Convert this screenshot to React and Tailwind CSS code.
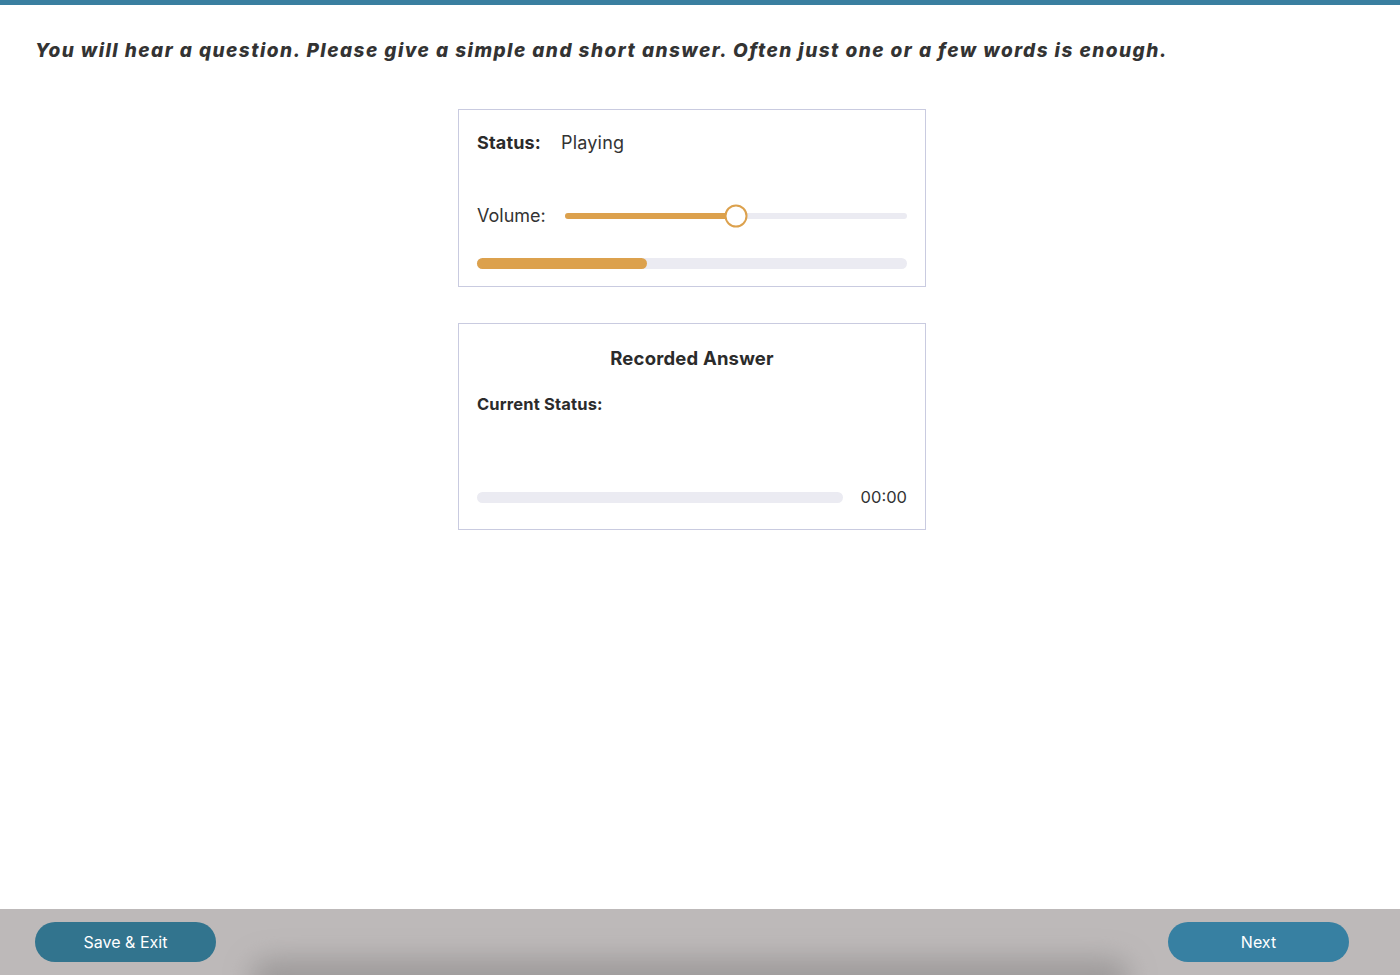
export default function App() {
  return (
    <div
      className="h-[975px] w-[1400px] flex flex-col bg-white text-[#333] overflow-hidden"
      style={{ fontFamily: "Inter, 'Liberation Sans', sans-serif" }}
    >
      {/* top accent */}
      <div className="h-[5px] bg-[#3a7fa0] shrink-0" />

      <main className="flex-1 flex flex-col">
        <h1 className="pl-[35px] pt-[34px] text-[19px] leading-[24px] font-extrabold italic tracking-[0.077em] text-[#333]">
          You will hear a question. Please give a simple and short answer. Often just one or a few words is enough.
        </h1>

        {/* Player card */}
        <section className="ml-[458px] mt-[46px] w-[468px] h-[178px] border border-[#c9cbe0] px-[18px] pt-[20px] flex flex-col">
          <div className="flex items-center text-[18px] leading-[26px]">
            <span className="font-bold text-[#2b2b2b] tracking-[0.01em]">Status:</span>
            <span className="ml-[20px] text-[#333] tracking-[0.01em]">Playing</span>
          </div>
          <div className="mt-[47px] flex items-center">
            <span className="text-[18px] leading-[26px] text-[#333] w-[88px]">Volume:</span>
            <div className="relative flex-1 h-[6px] rounded-full bg-[#ebebf2]">
              <div className="absolute left-0 top-0 h-full w-[50%] rounded-full bg-[#dca14d]" />
              <div className="absolute left-[50%] top-1/2 -translate-x-1/2 -translate-y-1/2 w-[23px] h-[23px] rounded-full bg-white border-2 border-[#dca14d]" />
            </div>
          </div>
          <div className="mt-[29px] h-[11px] w-full rounded-full bg-[#ebebf2]">
            <div className="h-full w-[39.5%] rounded-full bg-[#dca14d]" />
          </div>
        </section>

        {/* Recorded answer card */}
        <section className="ml-[458px] mt-[36px] w-[468px] h-[207px] border border-[#c9cbe0] px-[18px] pt-[21px] flex flex-col">
          <h2 className="text-center text-[18.5px] leading-[26px] font-bold text-[#2b2b2b] tracking-[0.01em]">Recorded Answer</h2>
          <div className="mt-[23px] text-[16.5px] leading-[20px] font-bold text-[#2b2b2b] tracking-[0.01em]">Current Status:</div>
          <div className="mt-[73px] flex items-center">
            <div className="flex-1 h-[11px] rounded-full bg-[#ebebf2]" />
            <span className="ml-[18px] text-[16.5px] leading-[20px] text-[#333]">00:00</span>
          </div>
        </section>
      </main>

      {/* footer */}
      <footer className="relative h-[66px] shrink-0 bg-[#bdb9b9] flex items-center justify-between px-[35px] overflow-hidden">
        <div className="absolute left-[250px] right-[270px] top-[50px] h-[40px] rounded-full bg-[#8f8c8c] blur-[14px] opacity-70" />
        <button className="relative w-[181px] h-[40px] rounded-full bg-[#32748e] text-white text-[16px]">
          Save &amp; Exit
        </button>
        <button className="relative mr-[16px] w-[181px] h-[40px] rounded-full bg-[#3780a2] text-white text-[16px]">
          Next
        </button>
      </footer>
    </div>
  );
}
